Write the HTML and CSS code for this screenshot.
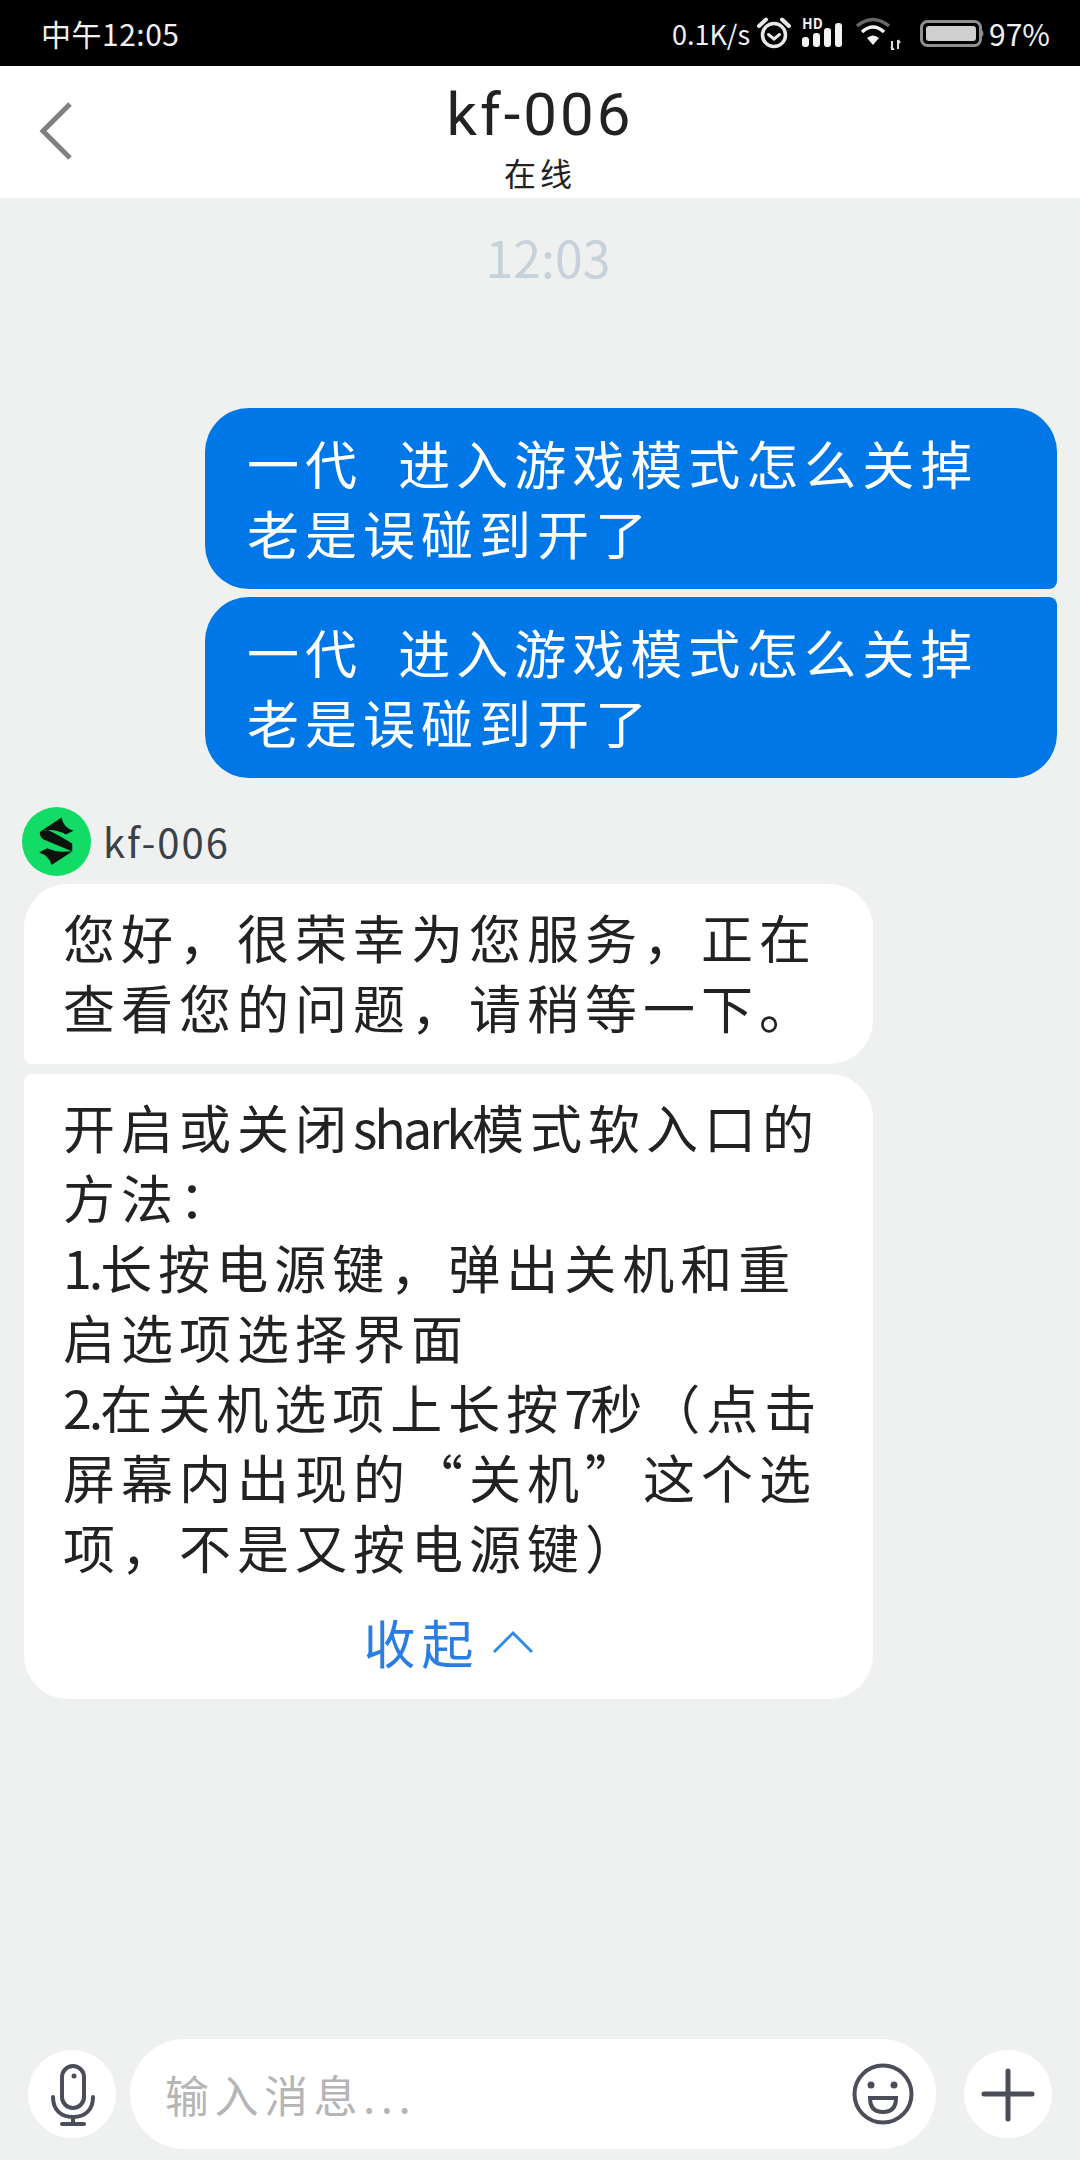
FILE: index.html
```html
<!DOCTYPE html>
<html lang="zh-CN">
<head>
    <meta charset="UTF-8">
    <meta name="viewport" content="width=device-width, initial-scale=1.0">
    <title>kf-006</title>
    <link rel="stylesheet" href="styles.css">
</head>
<body>
    <div id="status">
        <span class="clock">中午12:05</span>
        <div class="status-right">
            <span class="speed">0.1K/s</span>
            <svg class="alarm" width="34" height="34" viewBox="0 0 34 34" fill="none" stroke="#e8e8e8">
                <circle cx="17" cy="19" r="11.5" stroke-width="3.5"/>
                <path d="M11.5 18.5 L17 23 L22.5 18.5" stroke-width="3" stroke-linecap="round"/>
                <path d="M2 10 L9 3.5 M32 10 L25 3.5" stroke-width="4" stroke-linecap="round"/>
            </svg>
            <div class="signal">
                <span class="hd">HD</span>
                <svg width="42" height="26" viewBox="0 0 42 26" fill="#f2f2f2">
                    <rect x="0" y="14" width="7" height="10" rx="3"/>
                    <rect x="11" y="10" width="7" height="14" rx="3"/>
                    <rect x="22" y="5" width="7" height="19" rx="3"/>
                    <rect x="33" y="0" width="7" height="24" rx="3"/>
                </svg>
            </div>
            <svg class="wifi" width="46" height="34" viewBox="0 0 46 34" fill="none">
                <path d="M1 10 Q17 -3 33 10" stroke="#666" stroke-width="3.5"/>
                <path d="M6 16 Q17 6 28 16" stroke="#f2f2f2" stroke-width="3.5"/>
                <path d="M11 22 Q17 17 23 22 L17 29 Z" fill="#f2f2f2"/>
                <path d="M36 25 V34 M35 31 L38 34 M42 24 V33 M42 24 L44 27" stroke="#ddd" stroke-width="2"/>
            </svg>
            <svg class="battery" width="65" height="27" viewBox="0 0 65 27">
                <rect x="1.5" y="1.5" width="59" height="24" rx="6" fill="none" stroke="#8f8f8f" stroke-width="3"/>
                <rect x="6" y="6" width="50" height="15" rx="3" fill="#cfcfcf"/>
                <path d="M62 10 Q65 13.5 62 17 Z" fill="#8f8f8f"/>
            </svg>
            <span class="percent">97%</span>
        </div>
    </div>

    <div id="header">
        <svg class="back" width="36" height="60" viewBox="0 0 36 60" fill="none">
            <path d="M32 3 L5 30 L32 57" stroke="#808080" stroke-width="5"/>
        </svg>
        <div class="title">kf-006</div>
        <div class="online">在线</div>
    </div>

    <div id="chat">
        <div class="time">12:03</div>

        <div class="bubble mine first">一代&nbsp;&nbsp;进入游戏模式怎么关掉<br>老是误碰到开了</div>
        <div class="bubble mine last">一代&nbsp;&nbsp;进入游戏模式怎么关掉<br>老是误碰到开了</div>

        <div class="sender">
            <svg class="avatar" width="69" height="69" viewBox="37 19 206 206">
                <circle cx="140" cy="122" r="103" fill="#12dc66"/>
                <path d="M92 92 L155 50 Q160 80 191 90 L168 101 Q140 85 112 88 Z" fill="#0c120e"/>
                <path d="M90 93 L115 88 Q150 105 187 128 L187 152 L100 115 Q90 110 90 93 Z" fill="#0c120e"/>
                <path d="M187 152 L125 192 Q118 165 88 155 L112 142 Q145 155 168 152 Z" fill="#0c120e"/>
            </svg>
            <span class="name">kf-006</span>
        </div>

        <div class="bubble theirs">您好&#65292;很荣幸为您服务&#65292;正在<br>查看您的问题&#65292;请稍等一下。</div>
        <div class="bubble theirs">
            开启或关闭<span class="en">shark</span>模式软入口的<br>
            方法&#65306;<br>
            <span class="en">1.</span>长按电源键&#65292;弹出关机和重<br>
            启选项选择界面<br>
            <span class="en">2.</span>在关机选项上长按<span class="en">7</span>秒&#65288;点击<br>
            屏幕内出现的“关机”这个选<br>
            项&#65292;不是又按电源键&#65289;
            <div class="more">
                <span>收起</span>
                <svg width="42" height="24" viewBox="0 0 42 24" fill="none">
                    <path d="M2 22 L21 3 L40 22" stroke="#2f8be3" stroke-width="3"/>
                </svg>
            </div>
        </div>
    </div>

    <div id="bar">
        <div class="round">
            <svg width="88" height="88" viewBox="0 0 88 88" fill="none" stroke="#4b4e58" stroke-width="4">
                <rect x="34" y="16" width="22" height="42" rx="11"/>
                <circle cx="46" cy="26" r="2.5" fill="#4b4e58" stroke="none"/>
                <path d="M25 47 C25 60 33 67 45 67 C57 67 65 60 65 47" stroke-linecap="round"/>
                <path d="M45 67 V74 M34 74 H56" stroke-linecap="round"/>
            </svg>
        </div>
        <div class="input">
            <span class="placeholder">输入消息...</span>
            <svg width="62" height="62" viewBox="0 0 62 62" fill="none" stroke="#4b4e58" stroke-width="4">
                <circle cx="31" cy="31" r="28.5"/>
                <circle cx="19" cy="22" r="3.5" fill="#4b4e58" stroke="none"/>
                <circle cx="42" cy="22" r="3.5" fill="#4b4e58" stroke="none"/>
                <path d="M18 35 H44 Q44 49 31 49 Q18 49 18 35 Z"/>
            </svg>
        </div>
        <div class="round">
            <svg width="88" height="88" viewBox="0 0 88 88" fill="none" stroke="#4b4e58" stroke-width="5">
                <path d="M44 21 V69 M20 44 H68" stroke-linecap="round"/>
            </svg>
        </div>
    </div>
</body>
</html>
```

FILE: styles.css
```css
body {
    font-family: "Noto Sans CJK SC", "Noto Sans", sans-serif;
    margin: 0;
    padding: 0;
    width: 1080px;
    height: 2160px;
    display: flex;
    flex-direction: column;
    background-color: #eff1f1;
    color: #222;
}

/* status bar */
#status {
    height: 66px;
    background-color: #000;
    color: #f0f0f0;
    display: flex;
    justify-content: space-between;
    align-items: center;
    padding: 0 30px 0 41px;
    font-size: 30px;
}

.clock {
    letter-spacing: 0.5px;
}

.status-right {
    display: flex;
    align-items: center;
}

.speed {
    font-size: 27px;
    margin-right: 7px;
}

.alarm {
    margin-right: 11px;
}

.signal {
    display: flex;
    flex-direction: column;
    margin-right: 12px;
}

.hd {
    font-size: 14px;
    font-weight: bold;
    line-height: 12px;
    margin-bottom: -6px;
}

.wifi {
    margin-right: 18px;
}

.battery {
    margin-right: 4px;
}

/* header */
#header {
    height: 132px;
    background-color: #fff;
    position: relative;
    text-align: center;
    color: #222;
}

.back {
    position: absolute;
    left: 38px;
    top: 35px;
}

.title {
    font-family: Roboto, "Noto Sans", sans-serif;
    font-size: 60px;
    line-height: 60px;
    letter-spacing: 3px;
    padding-top: 19px;
}

.online {
    font-size: 32px;
    line-height: 46px;
    letter-spacing: 4px;
    padding-top: 4px;
}

/* messages */
#chat {
    flex: 1;
    display: flex;
    flex-direction: column;
}

.time {
    margin-top: 28px;
    height: 60px;
    line-height: 60px;
    padding-left: 16px;
    text-align: center;
    font-size: 50px;
    color: #c6d1d9;
}

.bubble {
    box-sizing: border-box;
    width: 849px;
    padding: 18px 39px 22px;
    font-size: 52px;
    line-height: 70px;
    letter-spacing: 6px;
    white-space: nowrap;
    border-radius: 44px;
}

.mine {
    align-self: flex-end;
    width: 852px;
    margin-right: 23px;
    padding: 20px 40px 21px 42px;
    background-color: #0077e6;
    color: #fff;
}

.mine.first {
    margin-top: 122px;
    border-bottom-right-radius: 8px;
}

.mine.last {
    margin-top: 8px;
    border-top-right-radius: 8px;
}

.sender {
    display: flex;
    align-items: center;
    margin: 29px 0 8px 22px;
}

.name {
    font-size: 40px;
    line-height: 69px;
    letter-spacing: 2px;
    color: #3a4248;
    margin-left: 12px;
}

.theirs {
    margin-left: 24px;
    margin-bottom: 10px;
    background-color: #fff;
    color: #222;
    border-top-left-radius: 8px;
}

.sender + .theirs {
    border-top-left-radius: 44px;
    border-bottom-left-radius: 8px;
}

.en {
    letter-spacing: -3px;
}

.more {
    margin-top: 25px;
    display: flex;
    justify-content: center;
    align-items: center;
    gap: 12px;
    color: #2a7de1;
}

/* input bar */
#bar {
    display: flex;
    align-items: center;
    padding: 0 28px;
    margin-bottom: 11px;
}

.round {
    width: 88px;
    height: 88px;
    border-radius: 50%;
    background-color: #fff;
}

.input {
    flex: 1;
    height: 110px;
    margin: 0 28px 0 14px;
    padding: 0 22px 0 35px;
    border-radius: 55px;
    background-color: #fff;
    display: flex;
    justify-content: space-between;
    align-items: center;
}

.placeholder {
    font-size: 44px;
    letter-spacing: 5.5px;
    color: #b5b5b5;
}
```
